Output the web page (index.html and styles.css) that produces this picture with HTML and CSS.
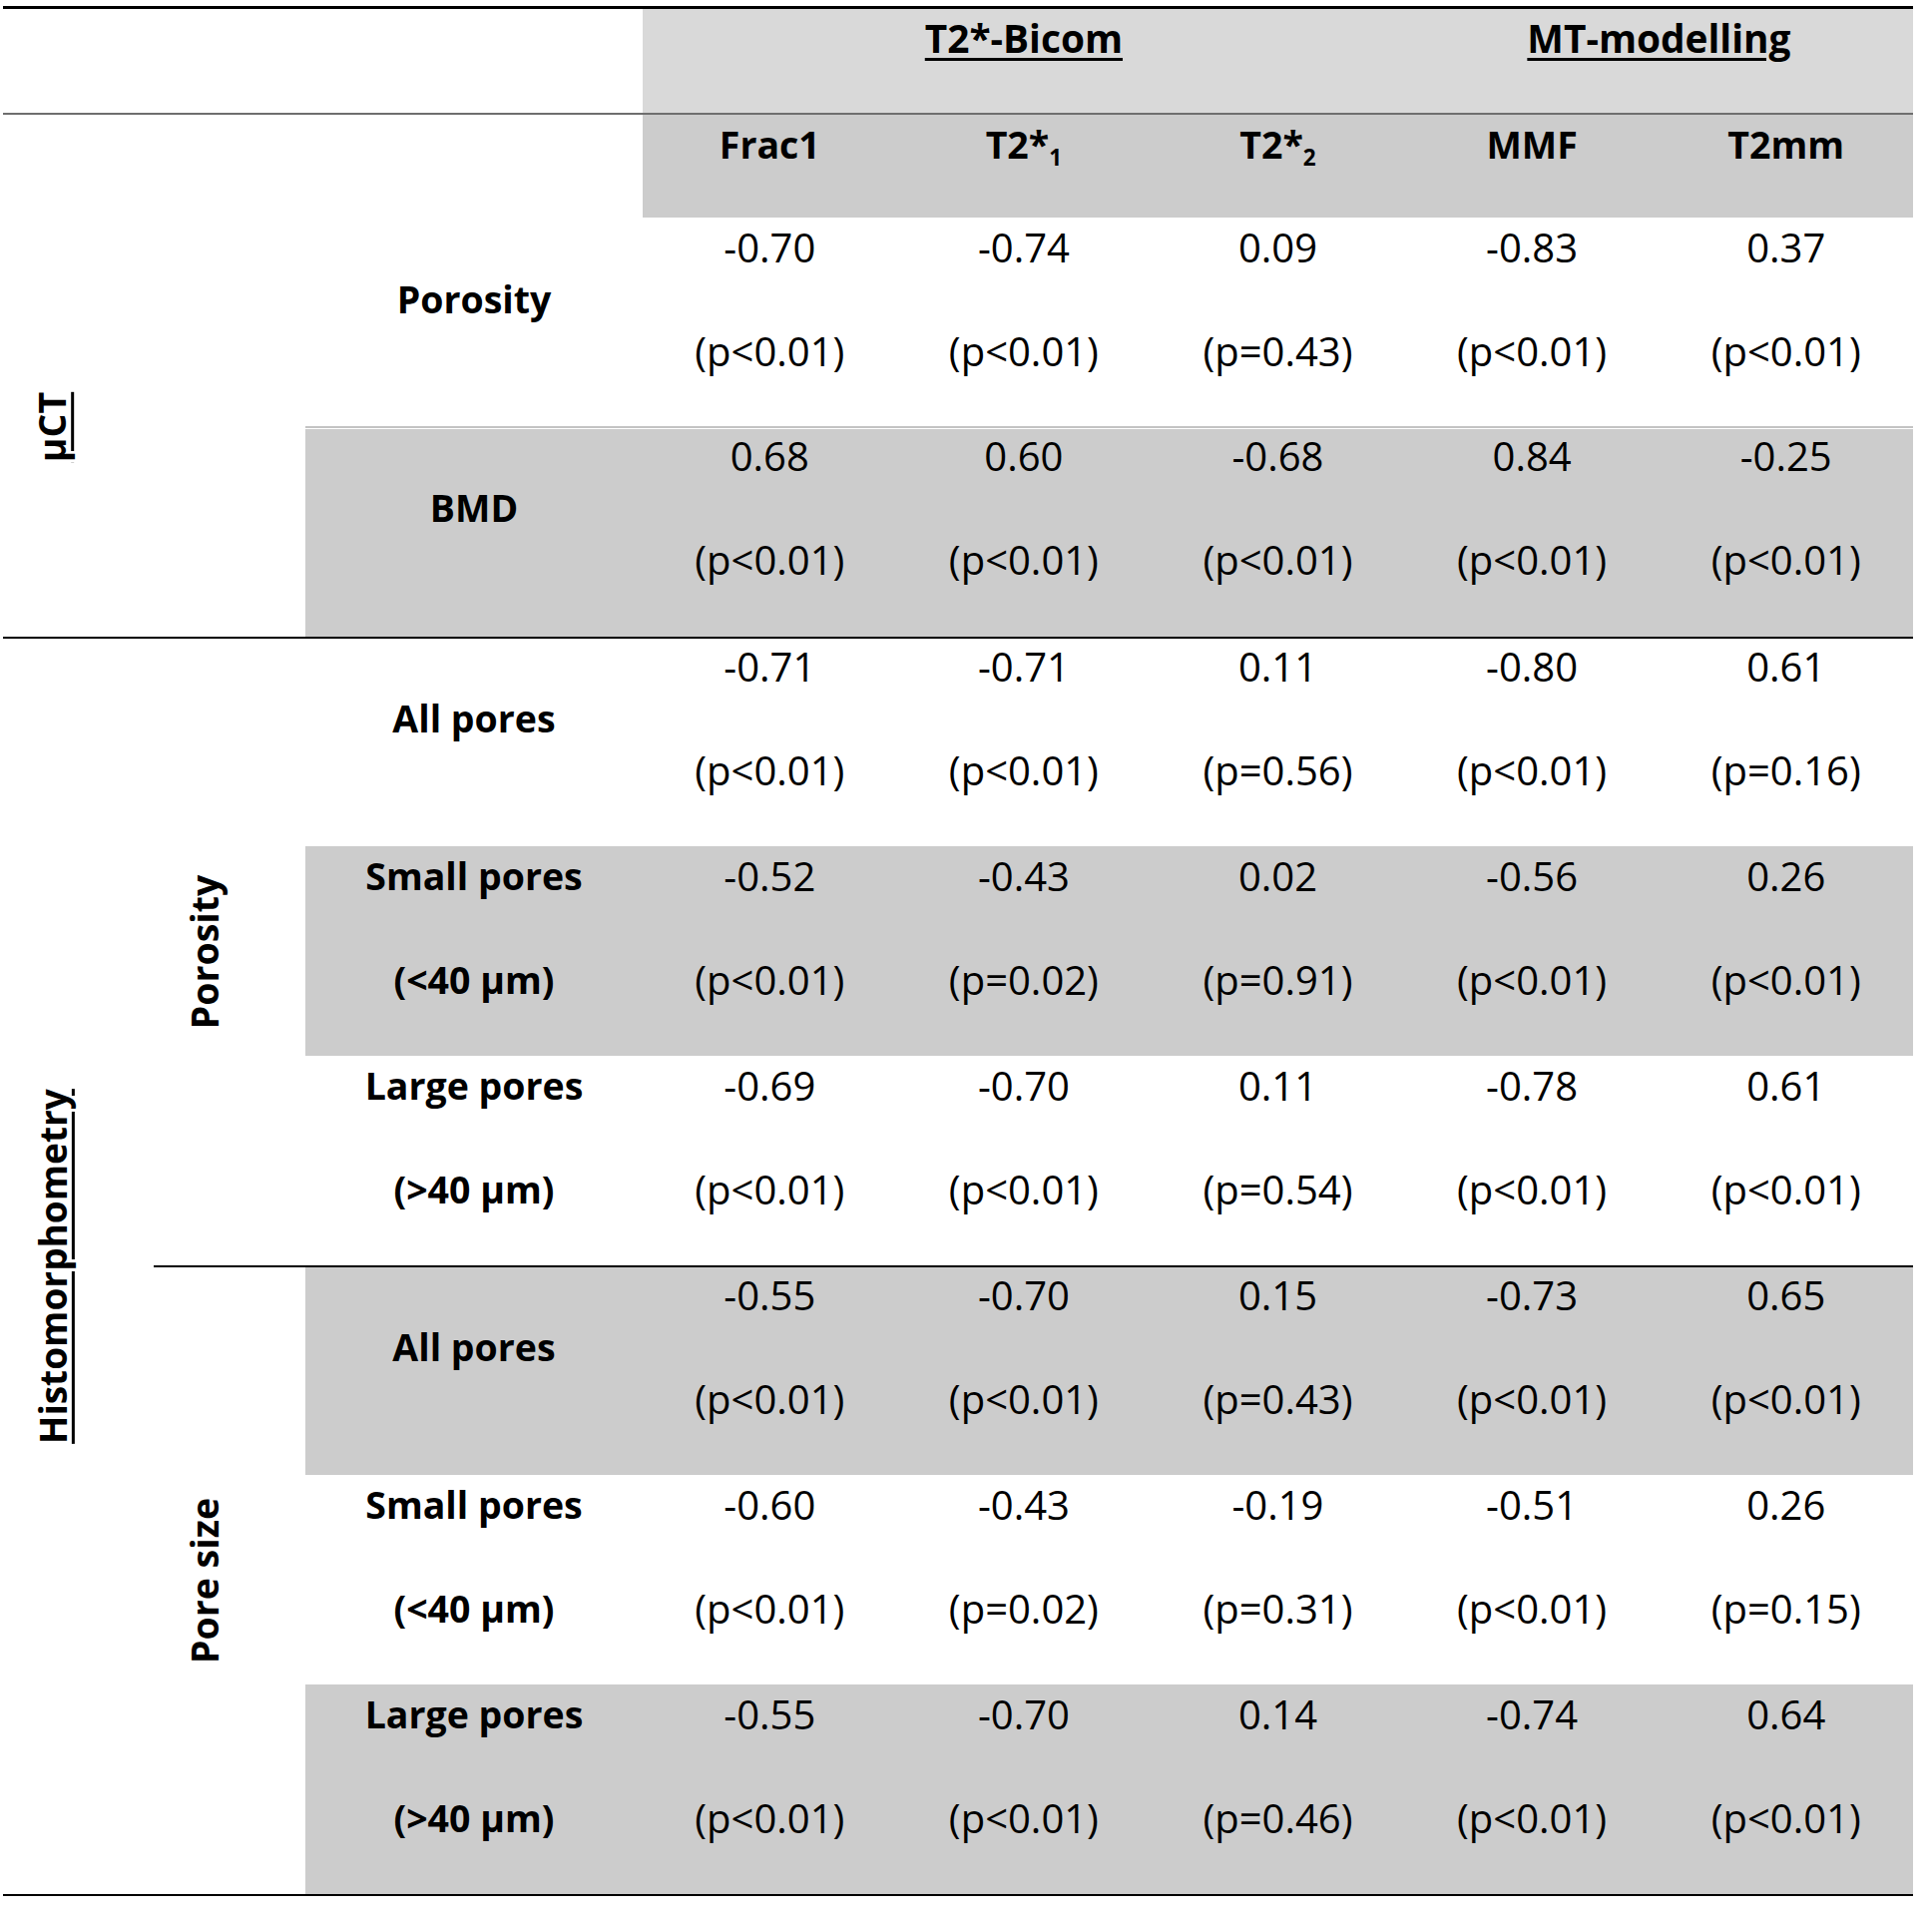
FILE: index.html
```html
<!DOCTYPE html>
<html>
<head>
<meta charset="utf-8">
<title>Correlation table</title>
<link rel="stylesheet" href="styles.css">
</head>
<body>
<div class="page">
  <div class="tbl">
    <!-- header row 1 -->
    <div class="c span3"></div>
    <div class="c h1 span3x"><span class="u">T2*-Bicom</span></div>
    <div class="c h1 span2x"><span class="u">MT-modelling</span></div>

    <!-- header row 2 -->
    <div class="c h2 blank span3"></div>
    <div class="c h2">Frac1</div>
    <div class="c h2">T2*<span class="sub">1</span></div>
    <div class="c h2">T2*<span class="sub">2</span></div>
    <div class="c h2">MMF</div>
    <div class="c h2">T2mm</div>

    <!-- group labels (placed explicitly) -->
    <div class="vert grp-uct"><span class="rot u">µCT</span></div>
    <div class="sub-uct"></div>
    <div class="vert grp-histo bt"><span class="rot u histo">Histomorphometry</span></div>
    <div class="vert sub-poro bt"><span class="rot">Porosity</span></div>
    <div class="vert sub-size bt"><span class="rot">Pore size</span></div>

    <!-- µCT: Porosity -->
    <div class="c lbl one">Porosity</div>
    <div class="c d"><span>-0.70</span><span>(p&lt;0.01)</span></div>
    <div class="c d"><span>-0.74</span><span>(p&lt;0.01)</span></div>
    <div class="c d"><span>0.09</span><span>(p=0.43)</span></div>
    <div class="c d"><span>-0.83</span><span>(p&lt;0.01)</span></div>
    <div class="c d"><span>0.37</span><span>(p&lt;0.01)</span></div>

    <!-- µCT: BMD -->
    <div class="c lbl one bmd">BMD</div>
    <div class="c d bmd"><span>0.68</span><span>(p&lt;0.01)</span></div>
    <div class="c d bmd"><span>0.60</span><span>(p&lt;0.01)</span></div>
    <div class="c d bmd"><span>-0.68</span><span>(p&lt;0.01)</span></div>
    <div class="c d bmd"><span>0.84</span><span>(p&lt;0.01)</span></div>
    <div class="c d bmd"><span>-0.25</span><span>(p&lt;0.01)</span></div>

    <!-- Histo porosity: all pores -->
    <div class="c lbl one bt">All pores</div>
    <div class="c d bt"><span>-0.71</span><span>(p&lt;0.01)</span></div>
    <div class="c d bt"><span>-0.71</span><span>(p&lt;0.01)</span></div>
    <div class="c d bt"><span>0.11</span><span>(p=0.56)</span></div>
    <div class="c d bt"><span>-0.80</span><span>(p&lt;0.01)</span></div>
    <div class="c d bt"><span>0.61</span><span>(p=0.16)</span></div>

    <!-- small pores -->
    <div class="c lbl g"><span>Small pores</span><span>(&lt;40 µm)</span></div>
    <div class="c d g"><span>-0.52</span><span>(p&lt;0.01)</span></div>
    <div class="c d g"><span>-0.43</span><span>(p=0.02)</span></div>
    <div class="c d g"><span>0.02</span><span>(p=0.91)</span></div>
    <div class="c d g"><span>-0.56</span><span>(p&lt;0.01)</span></div>
    <div class="c d g"><span>0.26</span><span>(p&lt;0.01)</span></div>

    <!-- large pores -->
    <div class="c lbl"><span>Large pores</span><span>(&gt;40 µm)</span></div>
    <div class="c d"><span>-0.69</span><span>(p&lt;0.01)</span></div>
    <div class="c d"><span>-0.70</span><span>(p&lt;0.01)</span></div>
    <div class="c d"><span>0.11</span><span>(p=0.54)</span></div>
    <div class="c d"><span>-0.78</span><span>(p&lt;0.01)</span></div>
    <div class="c d"><span>0.61</span><span>(p&lt;0.01)</span></div>

    <!-- Pore size: all pores -->
    <div class="c lbl one g bt">All pores</div>
    <div class="c d g bt"><span>-0.55</span><span>(p&lt;0.01)</span></div>
    <div class="c d g bt"><span>-0.70</span><span>(p&lt;0.01)</span></div>
    <div class="c d g bt"><span>0.15</span><span>(p=0.43)</span></div>
    <div class="c d g bt"><span>-0.73</span><span>(p&lt;0.01)</span></div>
    <div class="c d g bt"><span>0.65</span><span>(p&lt;0.01)</span></div>

    <!-- small pores -->
    <div class="c lbl"><span>Small pores</span><span>(&lt;40 µm)</span></div>
    <div class="c d"><span>-0.60</span><span>(p&lt;0.01)</span></div>
    <div class="c d"><span>-0.43</span><span>(p=0.02)</span></div>
    <div class="c d"><span>-0.19</span><span>(p=0.31)</span></div>
    <div class="c d"><span>-0.51</span><span>(p&lt;0.01)</span></div>
    <div class="c d"><span>0.26</span><span>(p=0.15)</span></div>

    <!-- large pores -->
    <div class="c lbl g"><span>Large pores</span><span>(&gt;40 µm)</span></div>
    <div class="c d g"><span>-0.55</span><span>(p&lt;0.01)</span></div>
    <div class="c d g"><span>-0.70</span><span>(p&lt;0.01)</span></div>
    <div class="c d g"><span>0.14</span><span>(p=0.46)</span></div>
    <div class="c d g"><span>-0.74</span><span>(p&lt;0.01)</span></div>
    <div class="c d g"><span>0.64</span><span>(p&lt;0.01)</span></div>
  </div>
</div>
</body>
</html>
```
FILE: styles.css
```css
body {
  margin: 0;
  background: #fff;
  color: #000;
  font-family: "Open Sans", "DejaVu Sans", sans-serif;
}

.page {
  padding: 6px 19px 20px 3px;
}

.tbl {
  display: grid;
  width: 1914px;
  grid-template-columns: 151px 152px 338px repeat(5, 1fr);
  grid-template-rows: 104px 105px 209px 211px 210px 210px 210px 210px 210px 210px;
  border-top: 3px solid #000;
  border-bottom: 2px solid #000;
}

.c {
  box-sizing: border-box;
  text-align: center;
  min-width: 0;
}

.span3 { grid-column: span 3; }
.span3x { grid-column: span 3; }
.span2x { grid-column: span 2; }

.u { text-decoration: underline; text-decoration-thickness: 3px; text-underline-offset: 5px; }

.h1 {
  background: #d9d9d9;
  font-weight: bold;
  font-size: 38.8px;
  line-height: 52px;
  padding-top: 3px;
}

.h2 {
  background: #cccccc;
  border-top: 2px solid #6e6e6e;
  font-weight: bold;
  font-size: 37.5px;
  line-height: 52px;
  padding-top: 4px;
}
.h2.blank { background: #fff; }

.sub {
  font-size: 0.6em;
  vertical-align: -0.3em;
  line-height: 0;
}

.d, .lbl {
  display: flex;
  flex-direction: column;
  align-items: center;
  gap: 52px;
  padding-top: 4px;
  line-height: 52px;
  white-space: nowrap;
}
.d { font-size: 40px; }
.lbl { font-size: 37.5px; font-weight: bold; }
.lbl.one { padding-top: 56px; }

.g { background: #cccccc; }

.bt { border-top: 2px solid #000; padding-top: 2px; }
.lbl.one.bt { padding-top: 54px; }

.bmd {
  border-top: 2px solid #c4c4c4;
  background: linear-gradient(#fff 0 1px, #cccccc 1px);
  padding-top: 2px;
}
.lbl.one.bmd { padding-top: 54px; }

.vert {
  box-sizing: border-box;
  display: flex;
  align-items: center;
  justify-content: center;
  min-width: 0;
}
.rot {
  display: inline-block;
  transform: rotate(-90deg);
  white-space: nowrap;
  font-weight: bold;
  font-size: 37.5px;
  line-height: 52px;
}
.rot.histo { font-size: 37px; }

.grp-uct { grid-column: 1; grid-row: 3 / 5; padding-right: 52px; }
.sub-uct { grid-column: 2; grid-row: 3 / 5; }
.grp-histo { grid-column: 1; grid-row: 5 / 11; padding-right: 52px; }
.sub-poro { grid-column: 2; grid-row: 5 / 8; padding-right: 49px; }
.sub-size { grid-column: 2; grid-row: 8 / 11; padding-right: 49px; }
.vert.bt { padding-top: 0; }
```
